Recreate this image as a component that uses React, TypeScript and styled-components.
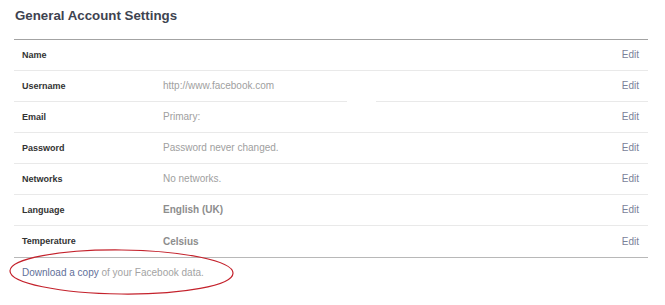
import React from "react";
import styled, { createGlobalStyle } from "styled-components";

const Global = createGlobalStyle`
  html, body { margin: 0; padding: 0; background: #fff; }
  body { font-family: "Liberation Sans", Arial, Helvetica, sans-serif; }
`;

const Page = styled.div`
  width: 665px;
  height: 305px;
  padding: 0 17px 0 14px;
  box-sizing: border-box;
  background: #fff;
`;

const Title = styled.h2`
  margin: 0;
  padding: 8px 0 0 1px;
  height: 32px;
  box-sizing: border-box;
  font-size: 13.3px;
  line-height: 16px;
  font-weight: bold;
  color: #3e4350;
`;

const Table = styled.div`
  margin-top: 7px;
  border-top: 1px solid #a3a3a3;
  border-bottom: 1px solid #b8b8b8;
`;

const Row = styled.div<{ $last?: boolean }>`
  position: relative;
  display: grid;
  grid-template-columns: 141px 1fr auto;
  align-items: center;
  height: 30px;
  padding: 0 9px 1px 8px;
  box-sizing: border-box;
  height: 31px;
  border-bottom: ${(p) => (p.$last ? "none" : "1px solid #e9e9e9")};
`;

const Label = styled.span`
  font-size: 9px;
  font-weight: bold;
  color: #333;
`;

const Value = styled.span<{ $strong?: boolean }>`
  font-size: 10px;
  color: ${(p) => (p.$strong ? "#8d8d8d" : "#a0a0a0")};
  font-weight: ${(p) => (p.$strong ? "bold" : "normal")};
`;

const Edit = styled.a`
  font-size: 10px;
  color: #7a8299;
  text-decoration: none;
`;

const Mask = styled.span`
  position: absolute;
  left: 333px;
  width: 29px;
  bottom: -1px;
  height: 1px;
  background: #fff;
`;

const Footer = styled.div`
  position: relative;
  padding: 8px 0 0 8px;
  font-size: 10px;
  line-height: 13px;
  color: #a3a3a3;
`;

const Link = styled.a`
  color: #5f7099;
  text-decoration: none;
`;

const Circle = styled.svg`
  position: absolute;
  left: -5px;
  top: -10px;
  overflow: visible;
`;

const rows: { label: string; value?: string; strong?: boolean; mask?: boolean }[] = [
  { label: "Name" },
  { label: "Username", value: "http://www.facebook.com", mask: true },
  { label: "Email", value: "Primary:" },
  { label: "Password", value: "Password never changed." },
  { label: "Networks", value: "No networks." },
  { label: "Language", value: "English (UK)", strong: true },
  { label: "Temperature", value: "Celsius", strong: true },
];

export default function App() {
  return (
    <Page>
      <Global />
      <Title>General Account Settings</Title>
      <Table>
        {rows.map((r, i) => (
          <Row key={r.label} $last={i === rows.length - 1}>
            <Label>{r.label}</Label>
            <Value $strong={r.strong}>{r.value ?? ""}</Value>
            <Edit href="#">Edit</Edit>
            {r.mask && <Mask />}
          </Row>
        ))}
      </Table>
      <Footer>
        <Link href="#">Download a copy</Link> of your Facebook data.
        <Circle width="230" height="50" viewBox="0 0 230 50">
          <ellipse
            cx="112.5"
            cy="24"
            rx="111.5"
            ry="22"
            fill="none"
            stroke="#c4222c"
            strokeWidth="1.2"
            transform="rotate(0.6 112.5 24)"
          />
        </Circle>
      </Footer>
    </Page>
  );
}
